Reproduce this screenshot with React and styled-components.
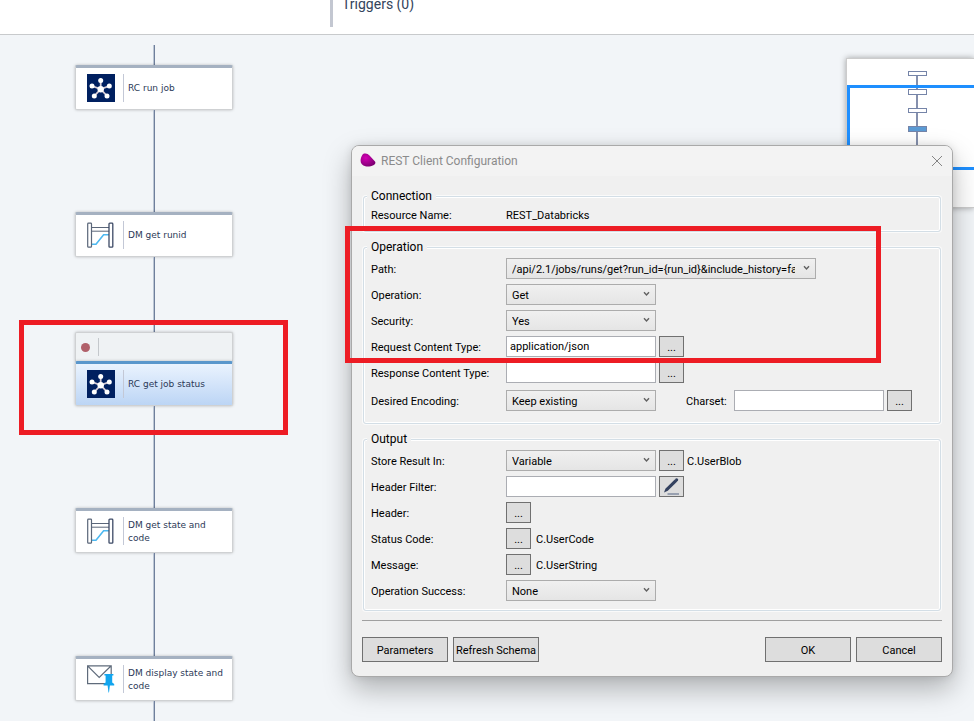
/* eslint-disable react/prop-types */
import React from 'react';
import styled, { createGlobalStyle } from 'styled-components';

const GlobalStyle = createGlobalStyle`
  * {
    box-sizing: border-box;
  }
  body {
    margin: 0;
    font-family: Roboto, "Noto Sans", sans-serif;
    font-size: 11px;
    color: #000;
    background-color: #f2f5f8;
  }
`;

const Page = styled.div`
  display: flex;
  flex-direction: column;
  min-height: 100vh;
  overflow: hidden;
`;

const Header = styled.header`
  display: flex;
  height: 35px;
  padding-left: 330px;
  background-color: #fff;
  border-bottom: 1px solid #c8cacc;
`;

const Triggers = styled.div`
  height: 27px;
  padding-left: 9px;
  border-left: 3px solid #c3c7d1;
  font-size: 14px;
  line-height: 8px;
  color: #33445c;
`;

const Canvas = styled.main`
  position: relative;
  flex: 1;
  display: flex;
  background-color: #f2f5f8;
`;

const Flow = styled.div`
  display: flex;
  flex-direction: column;
  align-items: center;
  width: 158px;
  margin-left: 75px;
  padding-top: 10px;
`;

const Connector = styled.div`
  width: 2px;
  height: ${({ $length }) => $length}px;
  flex-grow: ${({ $last }) => ($last ? 1 : 0)};
  background-color: #6f7f9c;
  border-left: 1px solid #bcc6d4;
`;

const NodeBox = styled.div`
  display: flex;
  align-items: center;
  width: 100%;
  height: 45px;
  padding: 0 7px 2px 11px;
  border: 1px solid #cfd1d3;
  border-top: 3px solid ${({ $selected }) => ($selected ? '#5a97cc' : '#a5b1c1')};
  border-radius: 2px;
  background: ${({ $selected }) => ($selected ? 'linear-gradient(#eaf3fe, #bcd5f5)' : '#fff')};
  box-shadow: 0 0 3px rgba(0, 0, 0, 0.25);
  svg {
    flex: none;
  }
`;

const NodeLabel = styled.div`
  display: flex;
  align-items: center;
  height: 28px;
  margin-left: 8px;
  padding: 2px 0 0 4px;
  border-left: 1px solid #c3c8d6;
  font-family: "DejaVu Sans", sans-serif;
  font-size: 9px;
  line-height: 13px;
  color: #2b3957;
`;

const Badge = styled.div`
  display: flex;
  align-items: center;
  width: 100%;
  height: 29px;
  padding-left: 5px;
  border: 1px solid #cfd1d3;
  border-bottom: 0;
  border-radius: 2px 2px 0 0;
  background-color: #eff2f4;
  box-shadow: 0 0 3px rgba(0, 0, 0, 0.25);
`;

const BadgeDot = styled.span`
  width: 9px;
  height: 9px;
  border-radius: 50%;
  background-color: #b0606a;
`;

const BadgeLine = styled.span`
  width: 1px;
  height: 18px;
  margin-left: 8px;
  background-color: #c4c8cc;
`;

const MiniMap = styled.div`
  position: absolute;
  top: 23px;
  right: 0;
  width: 128px;
  height: 150px;
  overflow: hidden;
  border: 1px solid #ccc;
  border-right: 0;
  background-color: #fff;
  box-shadow: 0 0 6px rgba(0, 0, 0, 0.35);
`;

const Dialog = styled.section`
  position: absolute;
  top: 110px;
  left: 351px;
  right: 21px;
  border: 1px solid #a9a9a9;
  border-radius: 8px;
  background-color: #f0f0f0;
  box-shadow: 0 12px 28px rgba(0, 0, 0, 0.28), 0 0 8px rgba(0, 0, 0, 0.1);
`;

const TitleBar = styled.div`
  display: flex;
  align-items: center;
  height: 30px;
  padding: 0 9px 0 8px;
  border-radius: 7px 7px 0 0;
  background-color: #f3f3f3;
`;

const Title = styled.h1`
  flex: 1;
  margin: 0 0 0 5px;
  font-size: 12px;
  font-weight: 400;
  color: #8b8b8b;
`;

const CloseButton = styled.button`
  display: flex;
  padding: 0;
  border: 0;
  background: none;
`;

const Body = styled.form`
  padding: 12px 10px 14px;
`;

const Group = styled.fieldset`
  min-width: 0;
  margin: 0 1px 7px;
  padding: 0 7px ${({ $bottom }) => $bottom}px 3px;
  border: 1px solid #d3dee6;
  border-radius: 3px;
  box-shadow: 0 0 0 1px #fafafa, inset 0 0 0 1px #fff;
`;

const Legend = styled.legend`
  padding: 1px 4px 0;
  background-color: #f0f0f0;
  font-size: 12px;
  line-height: 15px;
`;

const Row = styled.div`
  display: flex;
  align-items: center;
  height: ${({ $height }) => $height || 26}px;
  margin-top: ${({ $top }) => $top || 0}px;
  padding-left: 4px;
`;

const RowLabel = styled.label`
  flex: none;
  width: 135px;
  padding-top: 2px;
`;

const InlineLabel = styled.label`
  width: 48px;
  margin-left: 30px;
  padding-top: 2px;
`;

const SelectWrap = styled.div`
  position: relative;
  width: ${({ $wide }) => ($wide ? 310 : 150)}px;
  height: 21px;
  svg {
    position: absolute;
    top: 7px;
    right: 6px;
    pointer-events: none;
  }
`;

const SelectBox = styled.select`
  appearance: none;
  width: 100%;
  height: 21px;
  padding: 2px 20px 0 5px;
  border: 1px solid #acacac;
  border-radius: 0;
  background: linear-gradient(#f0f0f0, #e5e5e5);
  font: inherit;
  color: #000;
`;

const TextBox = styled.input`
  width: 150px;
  height: 21px;
  padding: 0 3px;
  border: 1px solid #abadb3;
  background-color: #fff;
  font: inherit;
  color: #000;
`;

const SmallButton = styled.button`
  display: flex;
  align-items: center;
  justify-content: center;
  width: 25px;
  height: 21px;
  margin-left: ${({ $first }) => ($first ? 0 : 3)}px;
  padding: ${({ $icon }) => ($icon ? 0 : 2)}px 0 0;
  border: 1px solid #707070;
  background-color: #ddd;
  font: inherit;
  color: #000;
`;

const Value = styled.span`
  margin-left: ${({ $gap }) => $gap || 0}px;
  padding-top: 2px;
`;

const Actions = styled.div`
  display: flex;
  gap: 5px;
  margin-top: 9px;
  padding-top: 16px;
  border-top: 1px solid #a0a0a0;
`;

const ActionButton = styled.button`
  width: 86px;
  height: 25px;
  margin-left: ${({ $push }) => ($push ? 'auto' : 0)};
  padding: 2px 0 0;
  border: 1px solid #707070;
  background-color: #ddd;
  font: inherit;
  color: #000;
`;

const Highlight = styled.div`
  position: absolute;
  top: ${({ $top }) => $top}px;
  left: ${({ $left }) => $left}px;
  width: ${({ $width }) => $width}px;
  height: ${({ $height }) => $height}px;
  border: 5px solid #ed1c24;
  pointer-events: none;
`;

const spokes = [[13.7, 6.4], [22.3, 12], [20, 22], [7.3, 22], [5, 12]];

const RestIcon = () => (
  <svg width="28" height="28" viewBox="0 0 28 28">
    <rect width="28" height="28" fill="#002060" />
    {spokes.map(([x, y]) => (
      <g key={`${x}-${y}`}>
        <line x1="13.7" y1="15.2" x2={x} y2={y} stroke="#d9cfd8" strokeWidth="1.8" />
        <circle cx={x} cy={y} r="2.5" fill="#fff" />
      </g>
    ))}
    <circle cx="13.7" cy="15.2" r="3.2" fill="#fff" />
  </svg>
);

const MapIcon = () => (
  <svg width="28" height="28" viewBox="0 0 28 28" fill="none" stroke="#5a6679">
    <path d="M5 6.5h17M5 10.2h17" strokeWidth="1" />
    <path d="M5 23.2h4l7.6-9.5H22" stroke="#4db8f0" strokeWidth="1.6" />
    <rect x="0.7" y="2.2" width="3.8" height="24" rx="0.8" fill="#fff" strokeWidth="1.2" />
    <rect x="22" y="2.2" width="3.8" height="24" rx="0.8" fill="#fff" stroke="#3d4a66" strokeWidth="1.3" />
  </svg>
);

const MailIcon = () => (
  <svg width="28" height="28" viewBox="0 0 28 28" fill="none">
    <path d="M0.6 0.8h23.6v17.8H0.6zM0.6 0.8l11.6 11.6L24.2 0.8" stroke="#5f6b7b" strokeWidth="1.2" />
    <path d="M17.4 9h9v1.6h-1.2v6.8l2 1.6v1.4h-4.3L22 27.4h-.5l-.9-7h-4v-1.4l2-1.6v-6.8h-1.2z" fill="#12a5ee" />
  </svg>
);

const Logo = () => (
  <svg width="16" height="16" viewBox="0 0 16 16">
    <defs>
      <radialGradient id="gem" cx="0.35" cy="0.35" r="0.7">
        <stop offset="0" stopColor="#d400b4" />
        <stop offset="1" stopColor="#7d0072" />
      </radialGradient>
    </defs>
    <path d="M4 0.6C6 0 8 .6 9.5 2.4L15 8.600c1 1.400.2 2.800-1.600 3.600-2.200 1-5.400 1.600-8 1C2.400 12.400.6 10.600.6 8 .6 5.200 2 1.400 4 .6z" fill="url(#gem)" />
  </svg>
);

const Chevron = () => (
  <svg width="7" height="6" viewBox="0 0 7 6">
    <path d="M1 1.3l2.5 2.7L6 1.3" fill="none" stroke="#606060" strokeWidth="1.4" />
  </svg>
);

const PencilIcon = () => (
  <svg width="19" height="19" viewBox="0 0 19 19">
    <path d="M2 15.6l1.4-3.8L12.8 2.4l2.4 2.2-9.4 9.2z" fill="#33415f" />
    <circle cx="14.6" cy="2.8" r="1.6" fill="#33415f" />
    <path d="M5.5 17H17" stroke="#6b7893" strokeWidth="1.2" />
  </svg>
);

const MapDrawing = () => (
  <svg width="127" height="148" viewBox="0 0 127 148">
    <path d="M70 12v80" stroke="#8590ad" strokeWidth="2" />
    {[12, 30, 49, 67, 86].map((y) => (
      <rect
        key={y}
        x="61.5"
        y={y + 0.5}
        width="18"
        height={y === 30 || y === 67 ? 5 : 4}
        fill={y === 67 ? '#5b9bd5' : '#fff'}
        stroke="#7584a8"
      />
    ))}
    <rect x="1.5" y="27.5" width="180" height="82" fill="none" stroke="#1e8fff" strokeWidth="3" />
  </svg>
);

const icons = { rest: RestIcon, map: MapIcon, mail: MailIcon };

const Node = ({ icon, label, selected }) => {
  const Icon = icons[icon];
  return (
    <NodeBox $selected={selected}>
      <Icon />
      <NodeLabel>{label}</NodeLabel>
    </NodeBox>
  );
};

const Select = ({ id, value, wide }) => (
  <SelectWrap $wide={wide}>
    <SelectBox id={id} defaultValue={value}>
      <option>{value}</option>
    </SelectBox>
    <Chevron />
  </SelectWrap>
);

const Browse = ({ first, id, label }) => (
  <SmallButton type="button" id={id} $first={first} aria-label={label}>...</SmallButton>
);

const ConfigDialog = () => (
  <Dialog role="dialog" aria-labelledby="title">
    <TitleBar>
      <Logo />
      <Title id="title">REST Client Configuration</Title>
      <CloseButton type="button" aria-label="Close">
        <svg width="12" height="12" viewBox="0 0 12 12">
          <path d="M1 1l10 10M11 1L1 11" stroke="#858585" />
        </svg>
      </CloseButton>
    </TitleBar>
    <Body>
      <Group $bottom={7}>
        <Legend>Connection</Legend>
        <Row $height={20}>
          <RowLabel as="span">Resource Name:</RowLabel>
          <Value>REST_Databricks</Value>
        </Row>
      </Group>
      <Group $bottom={10}>
        <Legend>Operation</Legend>
        <Row>
          <RowLabel htmlFor="path">Path:</RowLabel>
          <Select id="path" wide value="/api/2.1/jobs/runs/get?run_id={run_id}&include_history=false" />
        </Row>
        <Row>
          <RowLabel htmlFor="operation">Operation:</RowLabel>
          <Select id="operation" value="Get" />
        </Row>
        <Row>
          <RowLabel htmlFor="security">Security:</RowLabel>
          <Select id="security" value="Yes" />
        </Row>
        <Row>
          <RowLabel htmlFor="request">Request Content Type:</RowLabel>
          <TextBox id="request" defaultValue="application/json" />
          <Browse label="Browse request content type" />
        </Row>
        <Row>
          <RowLabel htmlFor="response">Response Content Type:</RowLabel>
          <TextBox id="response" />
          <Browse label="Browse response content type" />
        </Row>
        <Row $top={2}>
          <RowLabel htmlFor="encoding">Desired Encoding:</RowLabel>
          <Select id="encoding" value="Keep existing" />
          <InlineLabel htmlFor="charset">Charset:</InlineLabel>
          <TextBox id="charset" />
          <Browse label="Browse charset" />
        </Row>
      </Group>
      <Group $bottom={7}>
        <Legend>Output</Legend>
        <Row>
          <RowLabel htmlFor="store">Store Result In:</RowLabel>
          <Select id="store" value="Variable" />
          <Browse label="Browse result variable" />
          <Value $gap={3}>C.UserBlob</Value>
        </Row>
        <Row>
          <RowLabel htmlFor="filter">Header Filter:</RowLabel>
          <TextBox id="filter" />
          <SmallButton type="button" $icon aria-label="Edit header filter">
            <PencilIcon />
          </SmallButton>
        </Row>
        <Row>
          <RowLabel htmlFor="header">Header:</RowLabel>
          <Browse first id="header" />
        </Row>
        <Row>
          <RowLabel htmlFor="status">Status Code:</RowLabel>
          <Browse first id="status" />
          <Value $gap={5}>C.UserCode</Value>
        </Row>
        <Row>
          <RowLabel htmlFor="message">Message:</RowLabel>
          <Browse first id="message" />
          <Value $gap={5}>C.UserString</Value>
        </Row>
        <Row>
          <RowLabel htmlFor="success">Operation Success:</RowLabel>
          <Select id="success" value="None" />
        </Row>
      </Group>
      <Actions>
        <ActionButton type="button">Parameters</ActionButton>
        <ActionButton type="button">Refresh Schema</ActionButton>
        <ActionButton type="button" $push>OK</ActionButton>
        <ActionButton type="button">Cancel</ActionButton>
      </Actions>
    </Body>
  </Dialog>
);

const App = () => (
  <Page>
    <GlobalStyle />
    <Header>
      <Triggers>Triggers (0)</Triggers>
    </Header>
    <Canvas>
      <Flow>
        <Connector $length={20} />
        <Node icon="rest" label="RC run job" />
        <Connector $length={102} />
        <Node icon="map" label="DM get runid" />
        <Connector $length={75} />
        <Badge>
          <BadgeDot />
          <BadgeLine />
        </Badge>
        <Node icon="rest" label="RC get job status" selected />
        <Connector $length={102} />
        <Node icon="map" label="DM get state and code" />
        <Connector $length={103} />
        <Node icon="mail" label="DM display state and code" />
        <Connector $length={19} $last />
      </Flow>
      <MiniMap>
        <MapDrawing />
      </MiniMap>
      <ConfigDialog />
      <Highlight $top={285} $left={19} $width={269} $height={115} />
      <Highlight $top={191} $left={345} $width={536} $height={137} />
    </Canvas>
  </Page>
);

export default App;
